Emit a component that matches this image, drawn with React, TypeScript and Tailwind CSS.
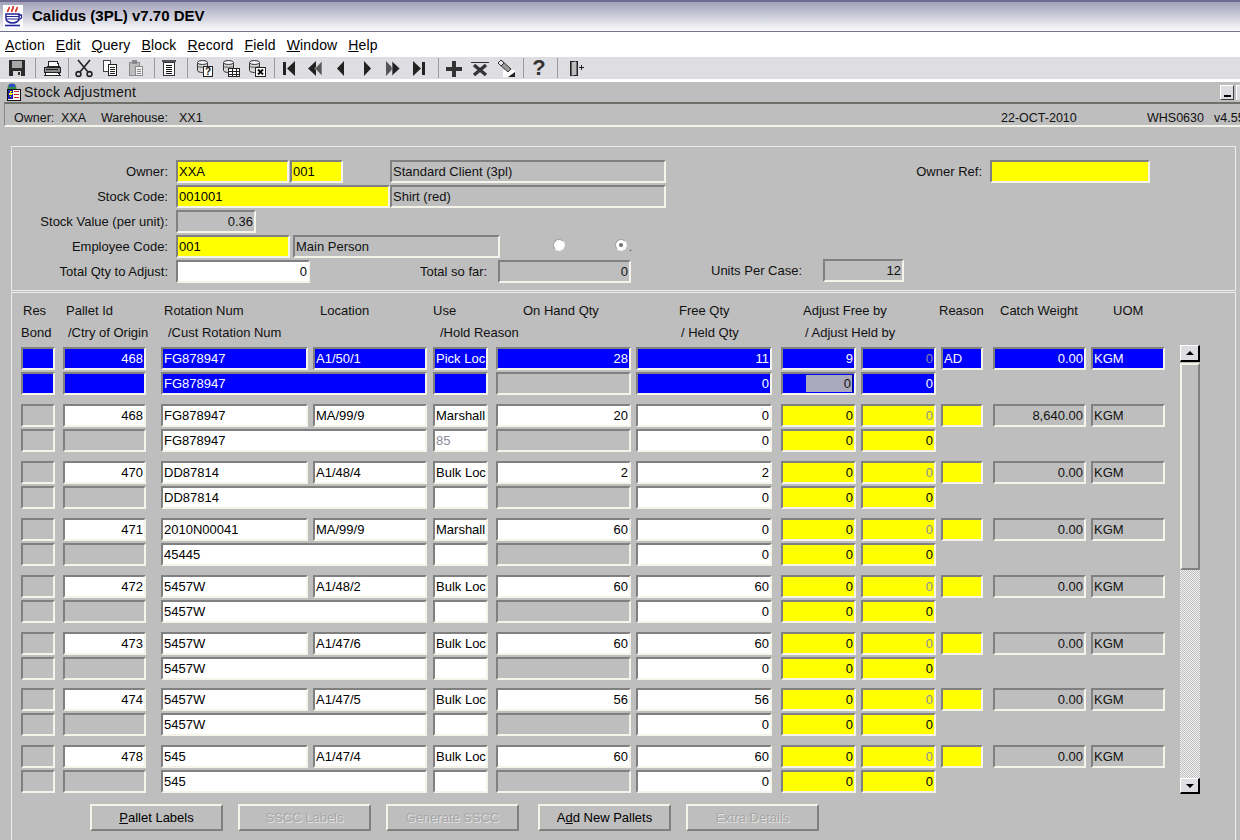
import { ReactNode } from "react"

const beveled = "border-2 border-t-[#808080] border-l-[#808080] border-b-[#f4f4ea] border-r-[#f4f4ea]"

const tones = {
  yellow: "bg-[#ffff00]",
  white: "bg-white",
  blue: "bg-[#0000ff]",
  grey: "bg-[#bebebe]",
}

const inks = {
  yellow: "text-black",
  white: "text-black",
  blue: "text-white",
  grey: "text-[#111111]",
}

type FieldProps = {
  tone: keyof typeof tones
  className: string
  right?: boolean
  dim?: boolean
  children?: ReactNode
}

const Field = ({ tone, className, right, dim, children }: FieldProps) => (
  <div
    className={`h-[23px] shrink-0 ${beveled} ${tones[tone]} ${className} flex items-center px-[1px] overflow-hidden whitespace-nowrap leading-none ${
      right ? "justify-end" : ""
    } ${dim ? "text-[#8c8c9c]" : inks[tone]}`}
  >
    {children}
  </div>
)

const menus = [
  ["A", "ction"],
  ["E", "dit"],
  ["Q", "uery"],
  ["B", "lock"],
  ["R", "ecord"],
  ["F", "ield"],
  ["W", "indow"],
  ["H", "elp"],
]

const Icon = ({ children }: { children: ReactNode }) => (
  <div className="w-[26px] h-[22px] shrink-0 flex items-center justify-center">
    <svg width="20" height="20" viewBox="0 0 20 20" shapeRendering="crispEdges">
      {children}
    </svg>
  </div>
)

const Sep = ({ className }: { className: string }) => (
  <div className={`w-[1px] h-[20px] bg-[#9a9aa2] shrink-0 ${className}`} />
)

const SaveIcon = () => (
  <Icon>
    <path d="M2 2h15l1 1v15H2z" fill="#2c2c2c" />
    <path d="M5 3h10v7H5z" fill="#a8a8a8" />
    <path d="M6 13h8v5H6z" fill="#d8d8d8" />
    <path d="M11 14h2v3h-2z" fill="#2c2c2c" />
  </Icon>
)

const PrintIcon = () => (
  <Icon>
    <path d="M7 3h8l2 5H6z" fill="#fff" stroke="#222" />
    <path d="M2 9h16v5H2z" fill="#8a8a8a" stroke="#222" />
    <path d="M4 14h12l2 3H3z" fill="#fff" stroke="#222" />
    <path d="M4 11h12v1H4z" fill="#222" />
  </Icon>
)

const CutIcon = () => (
  <Icon>
    <g fill="none" stroke="#222" strokeWidth="1.6" shapeRendering="auto">
      <path d="M4 2l10 12M16 2L6 14" />
      <circle cx="4.5" cy="16" r="2.4" />
      <circle cx="15.5" cy="16" r="2.4" />
    </g>
  </Icon>
)

const CopyIcon = () => (
  <Icon>
    <path d="M3.5 2.5h7v11h-7z" fill="#fff" stroke="#444" />
    <path d="M8.5 6.5h8v11h-8z" fill="#fff" stroke="#222" />
    <path d="M10 9h5v1h-5zM10 11h5v1h-5zM10 13h5v1h-5zM10 15h5v1h-5z" fill="#222" />
  </Icon>
)

const PasteIcon = () => (
  <Icon>
    <path d="M3.5 4.5h10v13h-10z" fill="#bdbdbd" stroke="#8a8a8a" />
    <path d="M6 2h5v4H6z" fill="#8a8a8a" />
    <path d="M9.5 8.5h7v9h-7z" fill="#f0f0f0" stroke="#8a8a8a" />
    <path d="M11 11h4v1h-4zM11 13h4v1h-4zM11 15h4v1h-4z" fill="#8a8a8a" />
  </Icon>
)

const ListIcon = () => (
  <Icon>
    <path d="M3 2h14v2H3z" fill="#555" />
    <path d="M4.5 4.5h11v13h-11z" fill="#fff" stroke="#333" />
    <path d="M7 7h6v1H7zM7 9h6v1H7zM7 11h6v1H7zM7 13h6v1H7zM7 15h6v1H7z" fill="#111" />
  </Icon>
)

const DbBase = () => (
  <g>
    <path d="M2.5 4.5v8c0 1 2 2 5 2s5-1 5-2v-8" fill="#d8d8d8" stroke="#333" shapeRendering="auto" />
    <ellipse cx="7.5" cy="4.5" rx="5" ry="2" fill="#f4f4f4" stroke="#333" shapeRendering="auto" />
    <path d="M3 8.5c1 1 8 1 9 0" fill="none" stroke="#555" shapeRendering="auto" />
  </g>
)

const DbQueryIcon = () => (
  <Icon>
    <DbBase />
    <path d="M8.5 8.5h9v10h-9z" fill="#fff" stroke="#222" />
    <text x="13" y="17" textAnchor="middle" fontSize="10" fontWeight="700" fontFamily="Liberation Sans" fill="#111">
      ?
    </text>
  </Icon>
)

const DbGridIcon = () => (
  <Icon>
    <DbBase />
    <path d="M7.5 10.500h11v8h-11z" fill="#fff" stroke="#222" />
    <path d="M7 13h11v1H7zM7 16h11v1H7zM11 10h1v8h-1zM15 10h1v8h-1z" fill="#222" />
  </Icon>
)

const DbDeleteIcon = () => (
  <Icon>
    <DbBase />
    <path d="M8.5 9.500h10v9h-10z" fill="#fff" stroke="#222" />
    <path d="M11 11.500l5 5M16 11.500l-5 5" stroke="#111" strokeWidth="2" fill="none" shapeRendering="auto" />
  </Icon>
)

const FirstIcon = () => (
  <Icon>
    <path d="M4 4h3v13H4z" fill="#222" />
    <path d="M16 3v15l-8-7.500z" fill="#222" shapeRendering="auto" />
  </Icon>
)

const PrevSetIcon = () => (
  <Icon>
    <path d="M11 3v15L3 10.500z" fill="#222" shapeRendering="auto" />
    <path d="M17 3v15l-7-7.500z" fill="#555" stroke="#dddde2" strokeWidth="0.7" shapeRendering="auto" />
  </Icon>
)

const PrevIcon = () => (
  <Icon>
    <path d="M13 3v15l-7-7.500z" fill="#222" shapeRendering="auto" />
  </Icon>
)

const NextIcon = () => (
  <Icon>
    <path d="M7 3v15l7-7.500z" fill="#222" shapeRendering="auto" />
  </Icon>
)

const NextSetIcon = () => (
  <Icon>
    <path d="M3 3v15l7-7.500z" fill="#555" shapeRendering="auto" />
    <path d="M9 3v15l8-7.500z" fill="#222" stroke="#dddde2" strokeWidth="0.7" shapeRendering="auto" />
  </Icon>
)

const LastIcon = () => (
  <Icon>
    <path d="M4 3v15l8-7.500z" fill="#222" shapeRendering="auto" />
    <path d="M13 4h3v13h-3z" fill="#222" />
  </Icon>
)

const PlusIcon = () => (
  <Icon>
    <path d="M8 3h4v6h6v4h-6v6H8v-6H2V9h6z" fill="#333" />
  </Icon>
)

const DeleteIcon = () => (
  <Icon>
    <path d="M1 4h18v1H1z" fill="#333" />
    <path d="M4 7l12 10M16 7L4 17" stroke="#333" strokeWidth="3.400" fill="none" shapeRendering="auto" />
  </Icon>
)

const ClearIcon = () => (
  <Icon>
    <path d="M7 12h12v7H7z" fill="#fff" />
    <path d="M2 5l3-3 10 9-3 3z" fill="#9a9a9a" stroke="#333" shapeRendering="auto" />
    <path d="M2 5l3-3 3 3-3 3z" fill="#e8e8e8" stroke="#333" shapeRendering="auto" />
    <path d="M12 19l7-5v5z" fill="#222" shapeRendering="auto" />
  </Icon>
)

const HelpIcon = () => (
  <div className="w-[26px] h-[22px] shrink-0 text-center text-[22px] leading-[22px] font-bold text-[#333333]">?</div>
)

const ExitIcon = () => (
  <Icon>
    <path d="M5.500 3.500h7v14h-7z" fill="#e8e8e8" stroke="#222" />
    <path d="M6 4l5-1v14l-5 1z" fill="#bdbdbd" stroke="#222" strokeWidth="0.6" />
    <path d="M14 9h5v1h-5zM16 7h1v5h-1z" fill="#222" />
  </Icon>
)

const Logo = () => (
  <div className="w-[20px] h-[23px] bg-white flex items-center justify-center">
    <svg width="20" height="23" viewBox="0 0 20 23" fill="none" shapeRendering="auto">
      <path d="M5 7c-1-2 2-3 1-5M9 7c-1-2 2-3 1-6M13 7c-1-2 2-3 1-5" stroke="#d9342c" strokeWidth="1.800" />
      <path d="M3 9h13v5c0 2-3 4-6.500 4S3 16 3 14z" fill="#fff" stroke="#23269a" strokeWidth="1.500" />
      <path d="M3 11.500h13M4 14h11" stroke="#23269a" strokeWidth="1" />
      <path d="M16 10h2.500v3l-3 2" stroke="#23269a" strokeWidth="1.300" />
      <path d="M2 20.500h15" stroke="#23269a" strokeWidth="1.600" />
    </svg>
  </div>
)

const WindowIcon = () => (
  <svg width="17" height="18" viewBox="0 0 17 18" shapeRendering="crispEdges">
    <circle cx="7" cy="5" r="4.500" fill="#3a8a4a" shapeRendering="auto" />
    <path d="M4 1h6v3H4z" fill="#2b4fc0" />
    <path d="M2 6h13v11H2z" fill="#fff" stroke="#111" />
    <path d="M3 7h5v9H3z" fill="#2020b0" />
    <path d="M5 8l-1 4h2l-1 3 3-5H6l1-2z" fill="#ffff00" />
    <path d="M9 8h5v1H9zM9 11h5v1H9zM9 14h5v1H9z" fill="#d02020" />
  </svg>
)

const Radio = ({ checked }: { checked?: boolean }) => (
  <div className="w-[12px] h-[12px] rounded-full bg-white border border-[#a0a0a0] border-r-[#f4f4ea] border-b-[#f4f4ea] flex items-center justify-center">
    {checked && <div className="w-[4px] h-[4px] rounded-full bg-[#707070]" />}
  </div>
)

const Label = ({ children }: { children: ReactNode }) => (
  <div className="w-[156px] shrink-0 pt-[1px] text-right whitespace-nowrap">{children}</div>
)

type Pallet = {
  id: string
  rotation: string
  location: string
  use: string
  onHand: string
  free: string
  custRotation: string
  hold?: string
  weight?: string
  spacing?: string
}

const pallets: Pallet[] = [
  { id: "468", rotation: "FG878947", location: "MA/99/9", use: "Marshall", onHand: "20", free: "0", custRotation: "FG878947", hold: "85", weight: "8,640.00" },
  { id: "470", rotation: "DD87814", location: "A1/48/4", use: "Bulk Loc", onHand: "2", free: "2", custRotation: "DD87814" },
  { id: "471", rotation: "2010N00041", location: "MA/99/9", use: "Marshall", onHand: "60", free: "0", custRotation: "45445" },
  { id: "472", rotation: "5457W", location: "A1/48/2", use: "Bulk Loc", onHand: "60", free: "60", custRotation: "5457W" },
  { id: "473", rotation: "5457W", location: "A1/47/6", use: "Bulk Loc", onHand: "60", free: "60", custRotation: "5457W", spacing: "mb-[8px]" },
  { id: "474", rotation: "5457W", location: "A1/47/5", use: "Bulk Loc", onHand: "56", free: "56", custRotation: "5457W" },
  { id: "478", rotation: "545", location: "A1/47/4", use: "Bulk Loc", onHand: "60", free: "60", custRotation: "545", spacing: "mb-0" },
]

const col = {
  res: "w-[34px]",
  pallet: "w-[83px] ml-[8px]",
  rotation: "w-[147px] ml-[15px]",
  rotationWide: "w-[266px] ml-[15px]",
  location: "w-[114px] ml-[5px]",
  use: "w-[55px] ml-[6px]",
  onHand: "w-[135px] ml-[8px]",
  free: "w-[136px] ml-[5px]",
  adjFree: "w-[75px] ml-[9px]",
  adjHeld: "w-[75px] ml-[5px]",
  reason: "w-[42px] ml-[5px]",
  weight: "w-[93px] ml-[10px]",
  uom: "w-[74px] ml-[5px]",
}

const PalletRows = ({ p }: { p: Pallet }) => (
  <div className={p.spacing ?? "mb-[9px]"}>
    <div className="flex mb-[2px]">
      <Field tone="grey" className={col.res} />
      <Field tone="white" className={col.pallet} right>{p.id}</Field>
      <Field tone="white" className={col.rotation}>{p.rotation}</Field>
      <Field tone="white" className={col.location}>{p.location}</Field>
      <Field tone="white" className={col.use}>{p.use}</Field>
      <Field tone="white" className={col.onHand} right>{p.onHand}</Field>
      <Field tone="white" className={col.free} right>{p.free}</Field>
      <Field tone="yellow" className={col.adjFree} right>0</Field>
      <Field tone="yellow" className={col.adjHeld} right dim>0</Field>
      <Field tone="yellow" className={col.reason} />
      <Field tone="grey" className={col.weight} right>{p.weight ?? "0.00"}</Field>
      <Field tone="grey" className={col.uom}>KGM</Field>
    </div>
    <div className="flex">
      <Field tone="grey" className={col.res} />
      <Field tone="grey" className={col.pallet} />
      <Field tone="white" className={col.rotationWide}>{p.custRotation}</Field>
      <Field tone="white" className={col.use} dim>{p.hold}</Field>
      <Field tone="grey" className={col.onHand} />
      <Field tone="white" className={col.free} right>0</Field>
      <Field tone="yellow" className={col.adjFree} right>0</Field>
      <Field tone="yellow" className={col.adjHeld} right>0</Field>
    </div>
  </div>
)

const Scrollbar = () => (
  <div className="w-[20px] h-[449px] ml-[15px] shrink-0 flex flex-col">
    <div className="h-[17px] bg-[#dddde2] border-t border-l border-t-white border-l-white border-r-2 border-b-2 border-r-black border-b-black flex items-center justify-center">
      <div className="w-0 h-0 border-x-[4px] border-x-transparent border-b-[4px] border-b-black" />
    </div>
    <div className="h-[207px] mt-[1px] border-2 border-l-[#f4f4ea] border-t-[#f4f4ea] border-r-[#808080] border-b-[#808080]" />
    <div className="flex-1 bg-[repeating-conic-gradient(#f4f4f4_0_25%,#bebebe_0_50%)] bg-[length:2px_2px]" />
    <div className="h-[16px] bg-[#dddde2] border-t border-l border-t-white border-l-white border-r-2 border-b-2 border-r-black border-b-black flex items-center justify-center">
      <div className="w-0 h-0 border-x-[4px] border-x-transparent border-t-[4px] border-t-black" />
    </div>
  </div>
)

const Button = ({ label, mnemonic, rest, disabled, className }: { label?: string; mnemonic?: string; rest?: string; disabled?: boolean; className?: string }) => (
  <div
    className={`w-[133px] h-[27px] shrink-0 pt-[1px] flex items-center justify-center border-2 border-t-[#f4f4ea] border-l-[#f4f4ea] border-r-[#808080] border-b-[#808080] whitespace-nowrap ${
      disabled ? "text-[#a6a6a6] [text-shadow:1px_1px_0_#e4e4e4]" : "text-black"
    } ${className ?? ""}`}
  >
    {label}
    {mnemonic && <u>{mnemonic}</u>}
    {rest}
  </div>
)

export default function App() {
  return (
    <div className="w-[1240px] h-[840px] overflow-hidden bg-[#bebebe] text-[13px] text-[#111111] font-['Liberation_Sans',Arial,sans-serif]">
      <div className="h-[32px] border-t-2 border-t-[#6d6b92] border-b border-b-[#73738f] bg-linear-to-b from-[#a3a2ba] to-[#fbfbfc] flex items-center pl-[3px]">
        <Logo />
        <span className="ml-[9px] text-[15px] font-bold text-black">Calidus (3PL) v7.70 DEV</span>
      </div>

      <div className="h-[25px] bg-white flex items-center pl-[5px] pt-[1px] gap-[11px] text-[14px] tracking-[0.15px] text-black">
        {menus.map(([key, rest]) => (
          <span key={key}>
            <u>{key}</u>
            {rest}
          </span>
        ))}
      </div>

      <div className="h-[22px] bg-[#dddde2] flex items-center pl-[4px]">
        <SaveIcon />
        <Sep className="ml-[5px] mr-[3px]" />
        <PrintIcon />
        <Sep className="ml-[3px] mr-[2px]" />
        <CutIcon />
        <CopyIcon />
        <PasteIcon />
        <Sep className="ml-[5px] mr-[1px]" />
        <ListIcon />
        <Sep className="ml-[5px] mr-[4px]" />
        <DbQueryIcon />
        <DbGridIcon />
        <DbDeleteIcon />
        <Sep className="ml-[4px] mr-[1px]" />
        <FirstIcon />
        <PrevSetIcon />
        <PrevIcon />
        <NextIcon />
        <NextSetIcon />
        <LastIcon />
        <Sep className="ml-[6px] mr-[2px]" />
        <PlusIcon />
        <DeleteIcon />
        <ClearIcon />
        <Sep className="ml-[4px] mr-[2px]" />
        <HelpIcon />
        <Sep className="ml-[5px] mr-[4px]" />
        <ExitIcon />
      </div>

      <div className="h-[3px] bg-white" />

      <div className="h-[20px] flex items-center pl-[5px] overflow-hidden">
        <WindowIcon />
        <span className="ml-[2px] text-[14px] tracking-[0.25px]">Stock Adjustment</span>
        <div className="ml-auto flex">
          <div className="w-[14px] h-[15px] bg-[#dddde2] border border-t-white border-l-white border-r-[#404040] border-b-[#404040] flex items-end justify-center pb-[2px]">
            <div className="w-[7px] h-[2px] bg-black" />
          </div>
          <div className="w-[6px] h-[15px] ml-[2px] mr-[-2px] bg-[#dddde2] border-l border-t border-white" />
        </div>
      </div>

      <div className="ml-[4px] h-[25px] pt-[7px] border-t-2 border-t-[#70706a] border-l border-l-[#8a8a8a] border-b-2 border-b-[#f4f4ea] flex items-center pl-[9px] whitespace-nowrap overflow-hidden text-[12.5px]">
        <span className="w-[47px] shrink-0">Owner:</span>
        <span className="w-[40px] shrink-0">XXA</span>
        <span className="w-[78px] shrink-0">Warehouse:</span>
        <span className="w-[822px] shrink-0">XX1</span>
        <span className="w-[146px] shrink-0">22-OCT-2010</span>
        <span className="w-[67px] shrink-0">WHS0630</span>
        <span>v4.55</span>
      </div>

      <div className="ml-[11px] mr-[4px] mt-[19px] border border-[#ececec] pt-[13px] pb-[7px]">
        <div className="flex items-center mb-[2px]">
          <Label>Owner:</Label>
          <Field tone="yellow" className="w-[113px] ml-[8px]">XXA</Field>
          <Field tone="yellow" className="w-[53px] ml-[1px]">001</Field>
          <Field tone="grey" className="w-[276px] ml-[47px]">Standard Client (3pl)</Field>
          <span className="ml-[245px] w-[71px] pt-[1px] text-right whitespace-nowrap">Owner Ref:</span>
          <Field tone="yellow" className="w-[160px] ml-[8px]" />
        </div>
        <div className="flex items-center mb-[2px]">
          <Label>Stock Code:</Label>
          <Field tone="yellow" className="w-[214px] ml-[8px]">001001</Field>
          <Field tone="grey" className="w-[276px]">Shirt (red)</Field>
        </div>
        <div className="flex items-center mb-[2px]">
          <Label>Stock Value (per unit):</Label>
          <Field tone="grey" className="w-[80px] ml-[8px]" right>0.36</Field>
        </div>
        <div className="flex items-center mb-[2px]">
          <Label>Employee Code:</Label>
          <Field tone="yellow" className="w-[114px] ml-[8px]">001</Field>
          <Field tone="grey" className="w-[207px] ml-[3px]">Main Person</Field>
          <div className="ml-[53px] mb-[3px]">
            <Radio />
          </div>
          <div className="ml-[50px] mb-[3px]">
            <Radio checked />
          </div>
          <span className="ml-[2px] mt-[3px] text-[10px] leading-none">.</span>
        </div>
        <div className="flex items-center">
          <Label>Total Qty to Adjust:</Label>
          <Field tone="white" className="w-[134px] ml-[8px]" right>0</Field>
          <span className="ml-[110px] w-[72px] pt-[1px] whitespace-nowrap">Total so far:</span>
          <Field tone="grey" className="w-[133px] ml-[6px]" right>0</Field>
          <span className="ml-[80px] w-[92px] -translate-y-[1px] whitespace-nowrap">Units Per Case:</span>
          <Field tone="grey" className="w-[81px] ml-[20px] -translate-y-[1px]" right>12</Field>
        </div>
      </div>

      <div className="ml-[11px] mr-[4px] mt-[1px] h-[560px] border border-[#ececec] pt-[7px]">
        <div className="flex h-[22px] items-center pl-[11px] whitespace-nowrap">
          <span className="w-[43px]">Res</span>
          <span className="w-[98px]">Pallet Id</span>
          <span className="w-[156px]">Rotation Num</span>
          <span className="w-[113px]">Location</span>
          <span className="w-[90px]">Use</span>
          <span className="w-[156px]">On Hand Qty</span>
          <span className="w-[124px]">Free Qty</span>
          <span className="w-[136px]">Adjust Free by</span>
          <span className="w-[61px]">Reason</span>
          <span className="w-[113px]">Catch Weight</span>
          <span>UOM</span>
        </div>
        <div className="flex h-[22px] items-center pl-[9px] whitespace-nowrap">
          <span className="w-[47px]">Bond</span>
          <span className="w-[100px]">/Ctry of Origin</span>
          <span className="w-[272px]">/Cust Rotation Num</span>
          <span className="w-[241px]">/Hold Reason</span>
          <span className="w-[124px]">/ Held Qty</span>
          <span>/ Adjust Held by</span>
        </div>

        <div className="flex pl-[9px] mt-[1px]">
          <div className="pt-[2px]">
            <div className="mb-[9px]">
              <div className="flex mb-[2px]">
                <Field tone="blue" className={col.res} />
                <Field tone="blue" className={col.pallet} right>468</Field>
                <Field tone="blue" className={col.rotation}>FG878947</Field>
                <Field tone="blue" className={col.location}>A1/50/1</Field>
                <Field tone="blue" className={col.use}>Pick Loc</Field>
                <Field tone="blue" className={col.onHand} right>28</Field>
                <Field tone="blue" className={col.free} right>11</Field>
                <Field tone="blue" className={col.adjFree} right>9</Field>
                <Field tone="blue" className={col.adjHeld} right dim>0</Field>
                <Field tone="blue" className={col.reason}>AD</Field>
                <Field tone="blue" className={col.weight} right>0.00</Field>
                <Field tone="blue" className={col.uom}>KGM</Field>
              </div>
              <div className="flex">
                <Field tone="blue" className={col.res} />
                <Field tone="blue" className={col.pallet} />
                <Field tone="blue" className={col.rotationWide}>FG878947</Field>
                <Field tone="blue" className={col.use} />
                <Field tone="grey" className={col.onHand} />
                <Field tone="blue" className={col.free} right>0</Field>
                <Field tone="blue" className={col.adjFree} right>
                  <span className="w-[47px] h-[17px] bg-[#a9a9bb] border-r border-r-[#10107a] text-[#111111] flex items-center justify-end pr-[1px]">0</span>
                </Field>
                <Field tone="blue" className={col.adjHeld} right>0</Field>
              </div>
            </div>
            {pallets.map((p) => (
              <PalletRows key={p.id} p={p} />
            ))}
          </div>
          <Scrollbar />
        </div>

        <div className="flex pl-[78px] mt-[10px]">
          <Button mnemonic="P" rest="allet Labels" />
          <Button label="SSCC Labels" disabled className="ml-[15px]" />
          <Button label="Generate SSCC" disabled className="ml-[15px]" />
          <Button label="A" mnemonic="d" rest="d New Pallets" className="ml-[19px]" />
          <Button label="Extra Details" disabled className="ml-[15px]" />
        </div>
      </div>
    </div>
  )
}
